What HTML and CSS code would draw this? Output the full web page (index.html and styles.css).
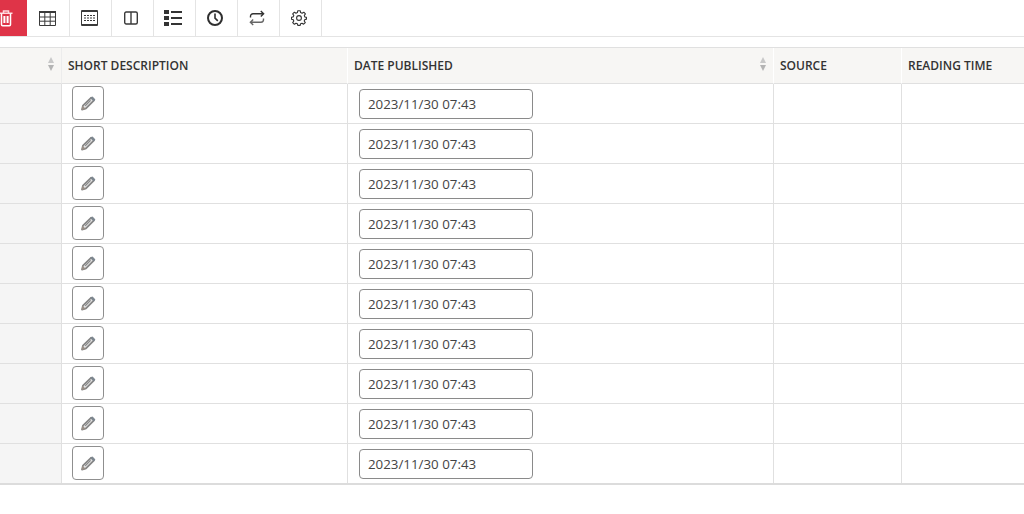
FILE: index.html
```html
<!DOCTYPE html>
<html lang="en">
<head>
<meta charset="utf-8">
<title>Articles</title>
<link rel="stylesheet" href="styles.css">
</head>
<body>
<svg class="defs" width="0" height="0" aria-hidden="true">
  <symbol id="pencil" viewBox="0 0 16 16">
    <path d="M11.2 2.6 14 5.4 6 13.4 2 14.6 2.9 10.6Z" fill="#e4e4e4" stroke="#858585" stroke-width="1.7" stroke-linejoin="round"/>
    <path d="M10.2 2.8 13.8 6.4 15.4 4.6 12.6 1.4Z" fill="#7d8790"/>
    <path d="M2.4 10.8 5.8 14 1.4 15Z" fill="#9a8f86"/>
    <path d="M5.2 10.8 10.6 5.4" stroke="#858585" stroke-width="1.1"/>
  </symbol>
</svg>
<nav class="toolbar">
  <button class="tool tool-danger" aria-label="Delete">
    <svg width="13" height="17" viewBox="0 0 13 17" fill="none" stroke="#fff" stroke-width="1.5"><path d="M0 3.2H12.5M3.5 3V1H8.5V3" stroke="#ffd9de"/><path d="M1.5 3.5V14.6C1.5 15.4 2 15.8 2.6 15.8H9.4C10 15.8 10.5 15.4 10.5 14.6V3.5"/><path d="M4.4 6V13M7.6 6V13" stroke-width="2"/></svg>
  </button>
  <button class="tool" aria-label="Table">
    <svg width="17" height="15" viewBox="0 0 17 15" fill="none" stroke="#3a3a3a" stroke-width="1"><path d="M.5 1.5H16.5V14.5H.5ZM.5 6H16.5M.5 10.2H16.5M5.8 1.5V14.5M11.2 1.5V14.5"/><path d="M0 1H17" stroke-width="2"/></svg>
  </button>
  <button class="tool" aria-label="Compact table">
    <svg width="17" height="16" viewBox="0 0 17 16" fill="none" stroke="#3a3a3a" stroke-width="1"><path d="M.5 .5H16.5V15.5H.5Z"/><path d="M.5 1.5H16.5M.5 14.5H16.5"/><path d="M3 5.5H14M3 8H14M3 10.5H14" stroke-dasharray="2 1"/></svg>
  </button>
  <button class="tool" aria-label="Columns">
    <svg width="14" height="14" viewBox="0 0 14 14" fill="none" stroke="#3a3a3a" stroke-width="1.4"><rect x=".7" y="1" width="12.6" height="12" rx="1.5"/><path d="M7 1V13"/></svg>
  </button>
  <button class="tool" aria-label="List">
    <svg width="18" height="16" viewBox="0 0 18 16" fill="#333"><path d="M0 0H5V4H0ZM0 6H5V10H0ZM0 12H5V16H0ZM7 1H18V3H7ZM7 7H18V9H7ZM7 13H18V15H7Z"/></svg>
  </button>
  <button class="tool" aria-label="History">
    <svg width="16" height="16" viewBox="0 0 16 16" fill="none" stroke="#2f2f2f"><circle cx="8" cy="8" r="7" stroke-width="2"/><path d="M8 3.6V8.2L10.8 10.8" stroke-width="1.6"/></svg>
  </button>
  <button class="tool" aria-label="Repeat">
    <svg width="16" height="16" viewBox="0 0 16 16" fill="none" stroke-width="1.4"><path d="M1.5 7.5V6.2C1.5 4.7 2.6 3.8 4 3.8H14.5M11.8 1 14.6 3.8 11.8 6.4" stroke="#333"/><path d="M14.5 8.5V9.8C14.5 11.3 13.4 12.2 12 12.2H1.5M4.2 9.6 1.4 12.2 4.2 15" stroke="#666"/></svg>
  </button>
  <button class="tool" aria-label="Settings">
    <svg width="16" height="16" viewBox="0 0 16 16" fill="none" stroke="#333" stroke-width="1.1"><path d="M6.8 .7H9.2L9.6 2.6 11.1 3.3 12.8 2.2 14.4 3.9 13.3 5.5 13.9 7 15.5 7.4V9.1L13.8 9.6 13.2 11 14.3 12.6 12.6 14.2 11 13.2 9.6 13.8 9.2 15.4H6.8L6.4 13.8 5 13.2 3.4 14.3 1.7 12.6 2.8 11 2.2 9.6.5 9.2V7.3L2.2 6.9 2.8 5.5 1.7 3.9 3.4 2.2 5 3.3 6.4 2.6Z" stroke-linejoin="round"/><circle cx="8" cy="8" r="2.4"/></svg>
  </button>
</nav>
<div class="grid-wrap">
<table class="grid">
  <colgroup>
    <col class="c-select"><col class="c-short"><col class="c-date"><col class="c-source"><col class="c-reading">
  </colgroup>
  <thead>
    <tr>
      <th class="first sortable"><span class="sort" aria-hidden="true"></span></th>
      <th>SHORT DESCRIPTION</th>
      <th class="sortable">DATE PUBLISHED<span class="sort" aria-hidden="true"></span></th>
      <th>SOURCE</th>
      <th>READING TIME</th>
    </tr>
  </thead>
  <tbody>
    <tr><td class="first"></td><td><button class="edit" aria-label="Edit"><svg width="16" height="16"><use href="#pencil"/></svg></button></td><td><input class="date" value="2023/11/30 07:43"></td><td></td><td></td></tr>
    <tr><td class="first"></td><td><button class="edit" aria-label="Edit"><svg width="16" height="16"><use href="#pencil"/></svg></button></td><td><input class="date" value="2023/11/30 07:43"></td><td></td><td></td></tr>
    <tr><td class="first"></td><td><button class="edit" aria-label="Edit"><svg width="16" height="16"><use href="#pencil"/></svg></button></td><td><input class="date" value="2023/11/30 07:43"></td><td></td><td></td></tr>
    <tr><td class="first"></td><td><button class="edit" aria-label="Edit"><svg width="16" height="16"><use href="#pencil"/></svg></button></td><td><input class="date" value="2023/11/30 07:43"></td><td></td><td></td></tr>
    <tr><td class="first"></td><td><button class="edit" aria-label="Edit"><svg width="16" height="16"><use href="#pencil"/></svg></button></td><td><input class="date" value="2023/11/30 07:43"></td><td></td><td></td></tr>
    <tr><td class="first"></td><td><button class="edit" aria-label="Edit"><svg width="16" height="16"><use href="#pencil"/></svg></button></td><td><input class="date" value="2023/11/30 07:43"></td><td></td><td></td></tr>
    <tr><td class="first"></td><td><button class="edit" aria-label="Edit"><svg width="16" height="16"><use href="#pencil"/></svg></button></td><td><input class="date" value="2023/11/30 07:43"></td><td></td><td></td></tr>
    <tr><td class="first"></td><td><button class="edit" aria-label="Edit"><svg width="16" height="16"><use href="#pencil"/></svg></button></td><td><input class="date" value="2023/11/30 07:43"></td><td></td><td></td></tr>
    <tr><td class="first"></td><td><button class="edit" aria-label="Edit"><svg width="16" height="16"><use href="#pencil"/></svg></button></td><td><input class="date" value="2023/11/30 07:43"></td><td></td><td></td></tr>
    <tr><td class="first"></td><td><button class="edit" aria-label="Edit"><svg width="16" height="16"><use href="#pencil"/></svg></button></td><td><input class="date" value="2023/11/30 07:43"></td><td></td><td></td></tr>
  </tbody>
</table>
</div>
</body>
</html>
```

FILE: styles.css
```css
* { box-sizing: border-box; }
html, body { margin: 0; height: 100%; overflow: hidden; background: #fff; }
body { font-family: "Open Sans", "Noto Sans", sans-serif; color: #333; }
.defs { display: block; height: 0; }

.toolbar { display: flex; height: 37px; border-bottom: 1px solid #e4e4e4; }
.tool {
  width: 42px; height: 36px; padding: 0 3px 0 0; border: 0; border-right: 1px solid #e4e4e4;
  background: #fff; display: flex; align-items: center; justify-content: center;
}
.tool-danger {
  width: 27px; margin-right: 1px; padding: 1px 0 0; background: #df3448; border-right: 0;
  justify-content: flex-start;
}

.grid-wrap { margin-top: 10px; }
.grid {
  table-layout: fixed; width: 1044px; border-collapse: separate; border-spacing: 0;
  border-top: 1px solid #e0e0e0; border-bottom: 2px solid #dcdcdc;
}
.c-select { width: 62px; }
.c-short { width: 286px; }
.c-date { width: 426px; }
.c-source { width: 128px; }
.c-reading { width: 142px; }

th {
  height: 36px; padding: 0 6px; text-align: left; font-size: 12px; font-weight: 550;
  color: #333; background: #f7f6f4; border-right: 1px solid #fff; border-bottom: 1px solid #e0e0e0;
  position: relative;
}
th.first { border-right-color: #ececec; }
td {
  height: 40px; padding: 0; border-right: 1px solid #e0e0e0; border-bottom: 1px solid #e0e0e0;
  vertical-align: middle;
}
tbody tr:last-child td { border-bottom: 0; height: 39px; }
td.first { background: #f5f5f5; }

.sort {
  position: absolute; right: 7px; top: 9px; width: 6px; height: 14px;
}
.sort::before, .sort::after {
  content: ""; position: absolute; left: 0; border-left: 3px solid transparent; border-right: 3px solid transparent;
}
.sort::before { top: 0; border-bottom: 6px solid #c8c8c8; }
.sort::after { bottom: 0; border-top: 6px solid #b4b4b4; }

.edit {
  display: flex; align-items: center; justify-content: center; margin: -1px 0 0 10px;
  width: 32px; height: 34px; padding: 0; background: #fff;
  border: 1px solid #8f8f8f; border-radius: 4px;
}
.date {
  display: block; margin-left: 11px; width: 174px; height: 30px; padding: 0 8px;
  border: 1px solid #8a8a8a; border-radius: 4px; background: #fff;
  font: 13.33px "Open Sans", "Noto Sans", sans-serif; color: #444;
}
```
